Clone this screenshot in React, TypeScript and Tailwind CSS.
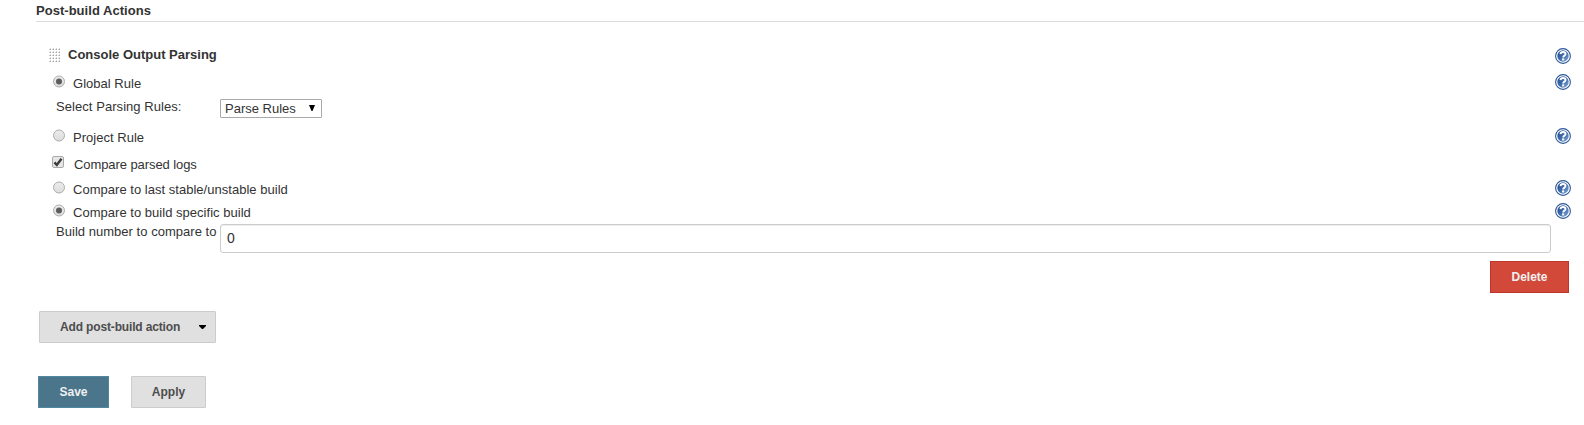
import React, { useState } from "react";

function HelpIcon() {
  return (
    <svg width="16" height="16" viewBox="0 0 16 16" className="block shrink-0" role="img">
      <defs>
        <linearGradient id="help-fill" x1="0" y1="0" x2="1" y2="1">
          <stop offset="0" stopColor="#1f4788" />
          <stop offset="0.5" stopColor="#3f6cac" />
          <stop offset="1" stopColor="#86a9d8" />
        </linearGradient>
      </defs>
      <circle cx="8" cy="8" r="7.4" fill="#fff" stroke="#2c5796" strokeWidth="1.1" />
      <circle cx="8" cy="8" r="5.7" fill="url(#help-fill)" />
      <path d="M5.5 6.1C5.6 4.6 6.7 4 8 4c1.5 0 2.5.7 2.5 1.9 0 1.6-2.3 1.7-2.3 3.6" fill="none" stroke="#fff" strokeWidth="1.9" />
      <rect x="7.1" y="10.4" width="2.1" height="2" fill="#fff" />
    </svg>
  );
}

function DragHandle() {
  return (
    <svg width="12" height="15" viewBox="0 0 12 15" className="-mt-0.5 block shrink-0">
      <defs>
        <pattern id="grip" width="3" height="3" patternUnits="userSpaceOnUse">
          <rect x="0" y="1" width="1" height="1" fill="#d0d0d0" />
          <rect x="1" y="0" width="1" height="1" fill="#d4d4d4" />
          <rect x="1" y="1" width="1" height="1" fill="#a4a4a4" />
        </pattern>
      </defs>
      <rect width="12" height="15" fill="url(#grip)" />
    </svg>
  );
}

function RadioMark({ checked }: { checked: boolean }) {
  return (
    <svg width="13" height="13" viewBox="0 0 13 13" className="block shrink-0">
      <defs>
        <linearGradient id="radio-fill" x1="0" y1="0" x2="0" y2="1">
          <stop offset="0" stopColor="#ececec" />
          <stop offset="1" stopColor="#dcdcdc" />
        </linearGradient>
      </defs>
      <circle cx="7" cy="6.5" r="5.5" fill="url(#radio-fill)" stroke="#adadad" />
      {checked && <circle cx="7" cy="6.5" r="3" fill="#5c5c5c" />}
    </svg>
  );
}

function CheckMark({ checked }: { checked: boolean }) {
  return (
    <svg width="13" height="13" viewBox="0 0 13 13" className="block shrink-0">
      <rect x="0.5" y="0.5" width="11" height="11" rx="1.5" fill="#e6e6e6" stroke="#a9a9a9" />
      {checked && <path d="M2.4 6.4l2.4 2.5 4.7-6.2" fill="none" stroke="#3c3c3c" strokeWidth="2.4" />}
    </svg>
  );
}

type RadioRowProps = {
  label: string;
  checked: boolean;
  onSelect: () => void;
  className: string;
};

function RadioRow({ label, checked, onSelect, className }: RadioRowProps) {
  return (
    <div className={"flex items-center justify-between pl-[52px] pr-[13px] " + className}>
      <button type="button" role="radio" aria-checked={checked} onClick={onSelect} className="flex h-5 items-center">
        <span className="-mt-0.5">
          <RadioMark checked={checked} />
        </span>
        <span className="ml-2 mt-[3px] leading-5 tracking-[0.025px]">{label}</span>
      </button>
      <HelpIcon />
    </div>
  );
}

export default function App() {
  const [rule, setRule] = useState("global");
  const [compare, setCompare] = useState(true);
  const [target, setTarget] = useState("specific");
  const [build, setBuild] = useState("0");

  return (
    <main className="h-[425px] w-full overflow-hidden bg-white font-['Liberation_Sans',Arial,sans-serif] text-[13px] text-[#333]">
      <h2 className="ml-9 h-[22px] border-b border-[#ddd] text-[13px] font-bold leading-[21px] tracking-[0.03px]">Post-build Actions</h2>

      <section className="pt-[21px]">
        <div className="flex h-[26px] items-center justify-between pl-[49px] pr-[13px]">
          <div className="flex items-center">
            <DragHandle />
            <h3 className="-mt-[3px] ml-[7px] font-bold leading-5">Console Output Parsing</h3>
          </div>
          <HelpIcon />
        </div>

        <RadioRow className="h-[26px]" label="Global Rule" checked={rule === "global"} onSelect={() => setRule("global")} />

        <div className="flex h-7 items-start pl-14 pt-1">
          <span className="-mt-0.5 w-[164px] leading-5 tracking-[0.06px]">Select Parsing Rules:</span>
          <button type="button" className="flex h-[19px] w-[102px] items-center justify-between rounded-[1px] border border-[#a9a9a9] bg-white pl-1 pr-1.5">
            <span className="leading-[17px]">Parse Rules</span>
            <svg width="6" height="6" viewBox="0 0 6 6" className="-mt-0.5">
              <path d="M0 0h6L3.5 6h-1z" fill="#000" />
            </svg>
          </button>
        </div>

        <RadioRow className="h-[26px]" label="Project Rule" checked={rule === "project"} onSelect={() => setRule("project")} />

        <div className="flex h-[26px] items-center pl-[52px]">
          <button type="button" role="checkbox" aria-checked={compare} onClick={() => setCompare(!compare)} className="flex h-5 items-center">
            <CheckMark checked={compare} />
            <span className="ml-[9px] mt-[5px] leading-5 tracking-[-0.08px]">Compare parsed logs</span>
          </button>
        </div>

        <RadioRow className="h-[26px]" label="Compare to last stable/unstable build" checked={target === "stable"} onSelect={() => setTarget("stable")} />
        <RadioRow className="h-5" label="Compare to build specific build" checked={target === "specific"} onSelect={() => setTarget("specific")} />

        <div className="flex h-10 items-start pl-14 pr-[33px] pt-[3px]">
          <label htmlFor="build" className="-mt-0.5 w-[164px] shrink-0 leading-5 tracking-[0.03px]">
            Build number to compare to
          </label>
          <input
            id="build"
            value={build}
            onChange={(e) => setBuild(e.target.value)}
            className="h-[29px] min-w-0 flex-1 rounded-[3px] border border-[#ccc] bg-white px-1.5 pb-0.5 text-sm shadow-[inset_0_1px_1px_rgba(0,0,0,0.075)] outline-none"
          />
        </div>

        <div className="flex justify-end pr-[15px]">
          <button type="button" className="h-8 w-[79px] border border-[#bd3629] bg-[#d24939] text-xs font-bold text-[#f0f0f0]">
            Delete
          </button>
        </div>
      </section>

      <div className="mt-[18px] flex pl-[39px]">
        <button type="button" className="flex h-8 w-[177px] items-center justify-between rounded-[1px] border border-[#ccc] bg-[#e0e0e0] pl-5 pr-[9px] text-xs font-bold text-[#4d4d4d]">
          <span className="tracking-[-0.15px]">Add post-build action</span>
          <svg width="7" height="4" viewBox="0 0 7 4">
            <path d="M0 0h7v1L4 4H3L0 1z" fill="#000" />
          </svg>
        </button>
      </div>

      <div className="mt-[33px] flex gap-[22px] pl-[38px]">
        <button type="button" className="h-8 w-[71px] border border-[#5088a1] bg-[#4b758b] text-xs font-bold text-[#f0f0f0]">
          Save
        </button>
        <button type="button" className="h-8 w-[75px] rounded-[1px] border border-[#ccc] bg-[#e0e0e0] text-xs font-bold text-[#4d4d4d]">
          Apply
        </button>
      </div>
    </main>
  );
}
